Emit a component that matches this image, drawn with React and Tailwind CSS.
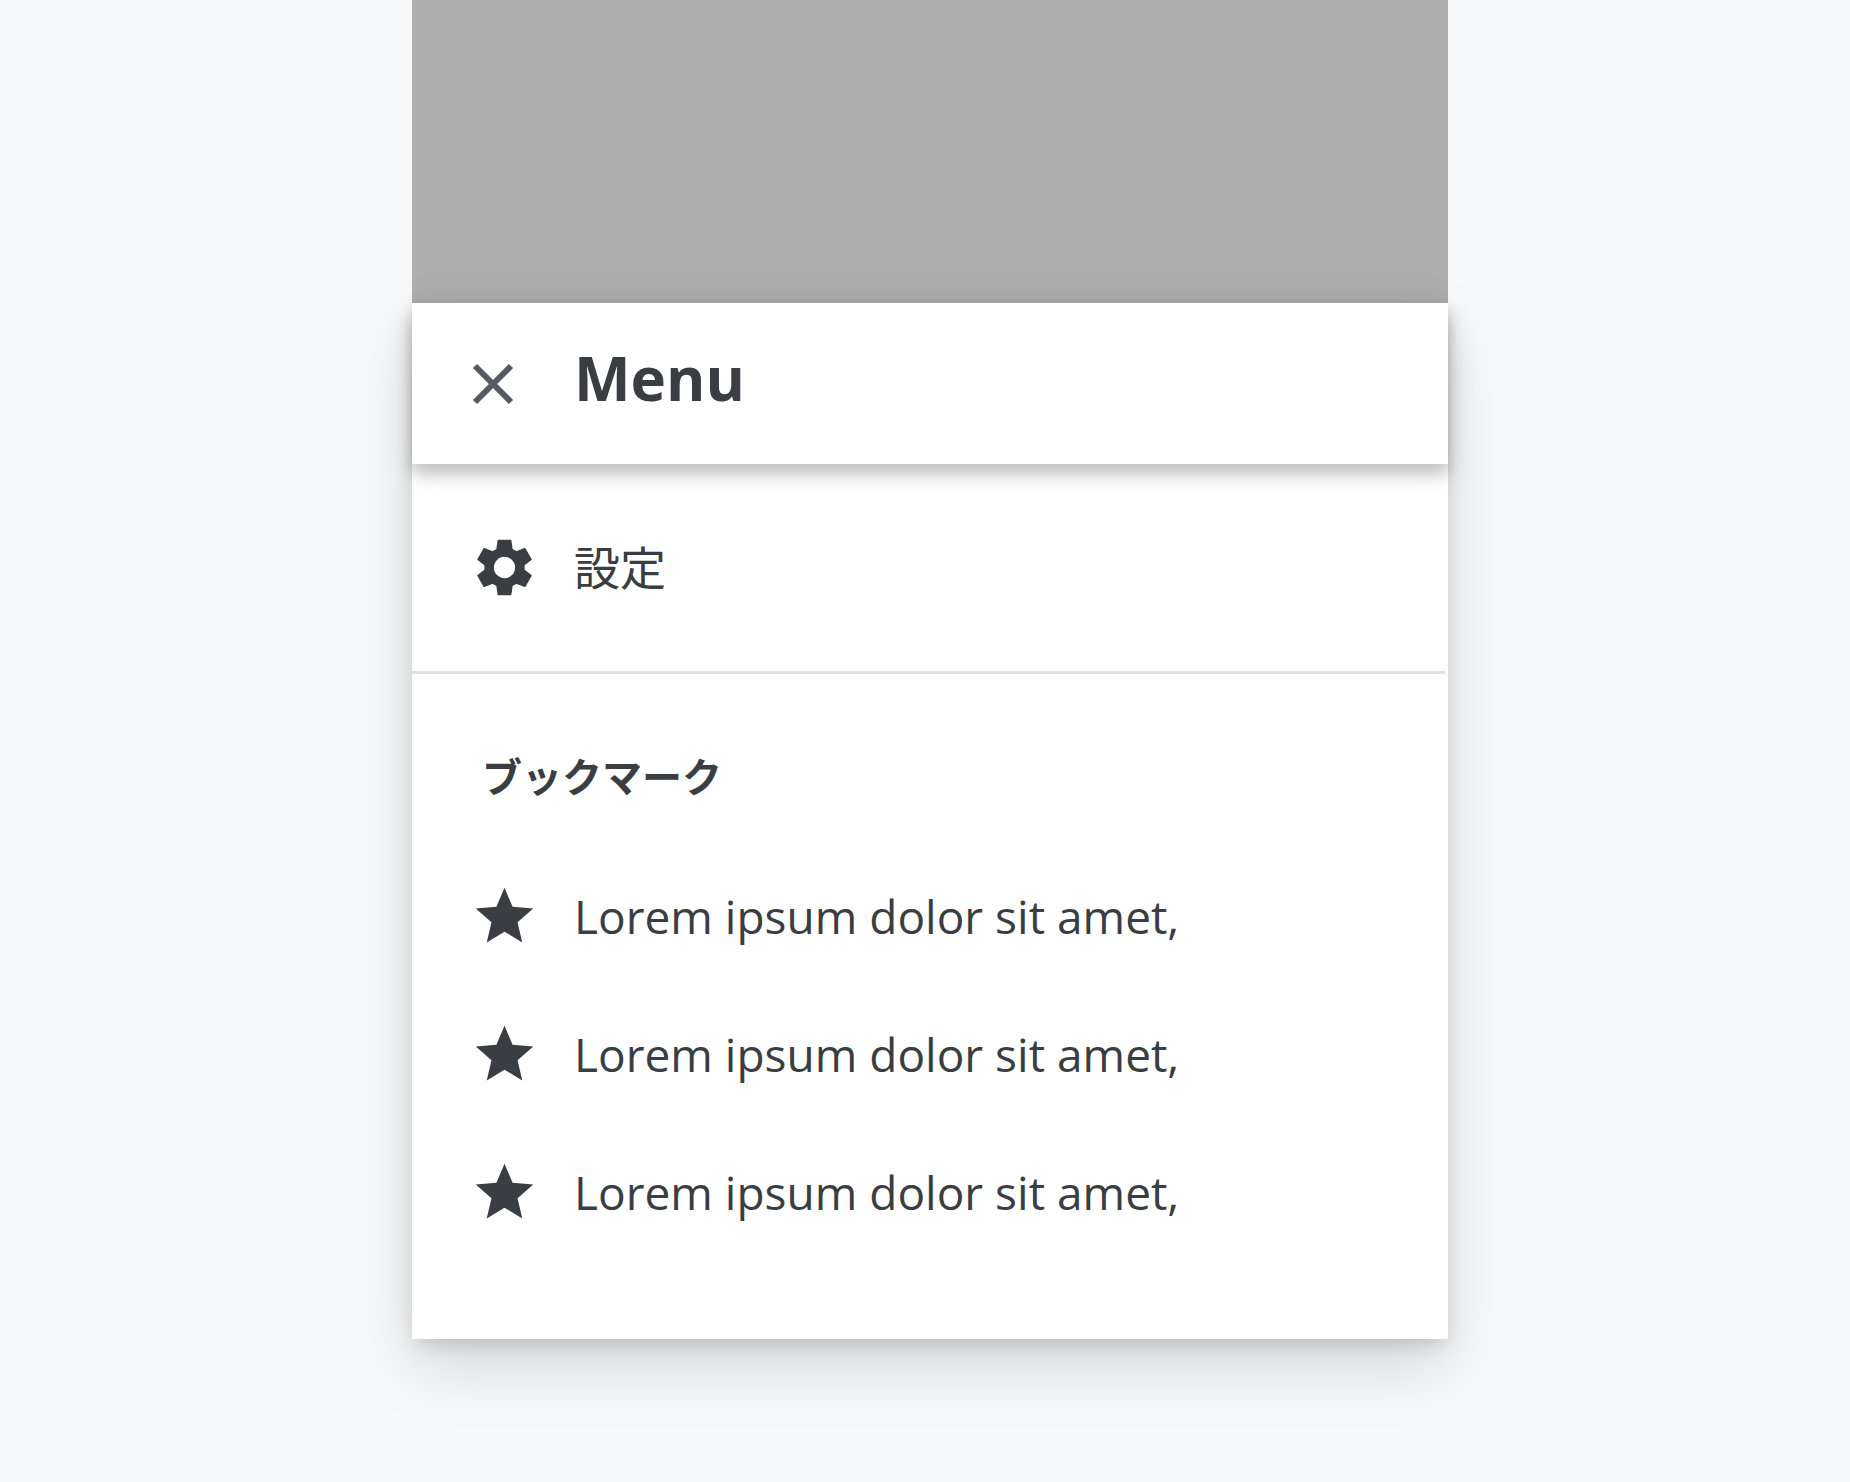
function Gear() {
  return (
    <svg viewBox="-12 -12 24 24" className="h-[69px] w-[69px] shrink-0" aria-hidden="true">
      <g fill="currentColor" stroke="currentColor" strokeWidth="0.5" strokeLinejoin="round">
        {[0, 60, 120, 180, 240, 300].map((angle) => (
          <path key={angle} d="M-2.15-9.4H2.15L2.6-6.3 3.6 0H-3.6L-2.6-6.3z" transform={`rotate(${angle})`} />
        ))}
      </g>
      <path d="M-2.8-6.45-4.25-5.65-7-.85V.85L-4.25 5.65-2.8 6.45H2.8L4.25 5.65 7 .85V-.85L4.25-5.65 2.8-6.45z" fill="currentColor" />
      <circle r="3.7" fill="white" />
    </svg>
  );
}

function Star() {
  return (
    <svg viewBox="0 0 24 24" className="h-[69px] w-[69px] shrink-0" fill="currentColor" aria-hidden="true">
      <path d="M12 17.27 18.18 21l-1.64-7.03L22 9.24l-7.19-.61L12 2 9.19 8.63 2 9.24l5.46 4.73L5.82 21z" />
    </svg>
  );
}

const bookmarks = [1, 2, 3];

export default function App() {
  return (
    <main className="min-h-screen bg-[#f7f8fa] pr-[402px] pb-[143px] pl-[412px] font-['Open_Sans','Noto_Sans_CJK_JP',sans-serif] text-[#3a3d41]">
      <div className="h-[303px] bg-[#adadad]" />
      <div className="bg-white shadow-[0_28px_60px_rgba(0,0,0,0.13),0_8px_20px_-5px_rgba(0,0,0,0.18)]">
        <header className="flex h-[161px] items-center bg-white pl-[59px] shadow-[0_10px_12px_rgba(0,0,0,0.17),0_10px_28px_rgba(0,0,0,0.1)]">
          <button type="button" aria-label="Close" className="mr-[59px]">
            <svg viewBox="0 0 44 44" className="h-[44px] w-[44px]" fill="none" stroke="#565b61" strokeWidth="6" aria-hidden="true">
              <path d="M4 4 40 40M40 4 4 40" />
            </svg>
          </button>
          <h1 className="pb-3 text-[60px] font-bold">Menu</h1>
        </header>
        <nav>
          <div className="mr-[3px] border-b-[3px] border-[#dfe0e2]">
            <button type="button" className="flex h-[207px] w-full items-center pl-[58px] text-left">
              <Gear />
              <span className="ml-[35px] text-[46px]">設定</span>
            </button>
          </div>
          <h2 className="pt-[73px] pl-[70px] text-[40px] leading-[60px] font-bold">ブックマーク</h2>
          <ul className="pt-[40px] pb-[78px]">
            {bookmarks.map((id) => (
              <li key={id}>
                <a href="#" className="flex h-[138px] items-center pl-[58px]">
                  <Star />
                  <span className="ml-[35px] text-[46px]">Lorem ipsum dolor sit amet,</span>
                </a>
              </li>
            ))}
          </ul>
        </nav>
      </div>
    </main>
  );
}
